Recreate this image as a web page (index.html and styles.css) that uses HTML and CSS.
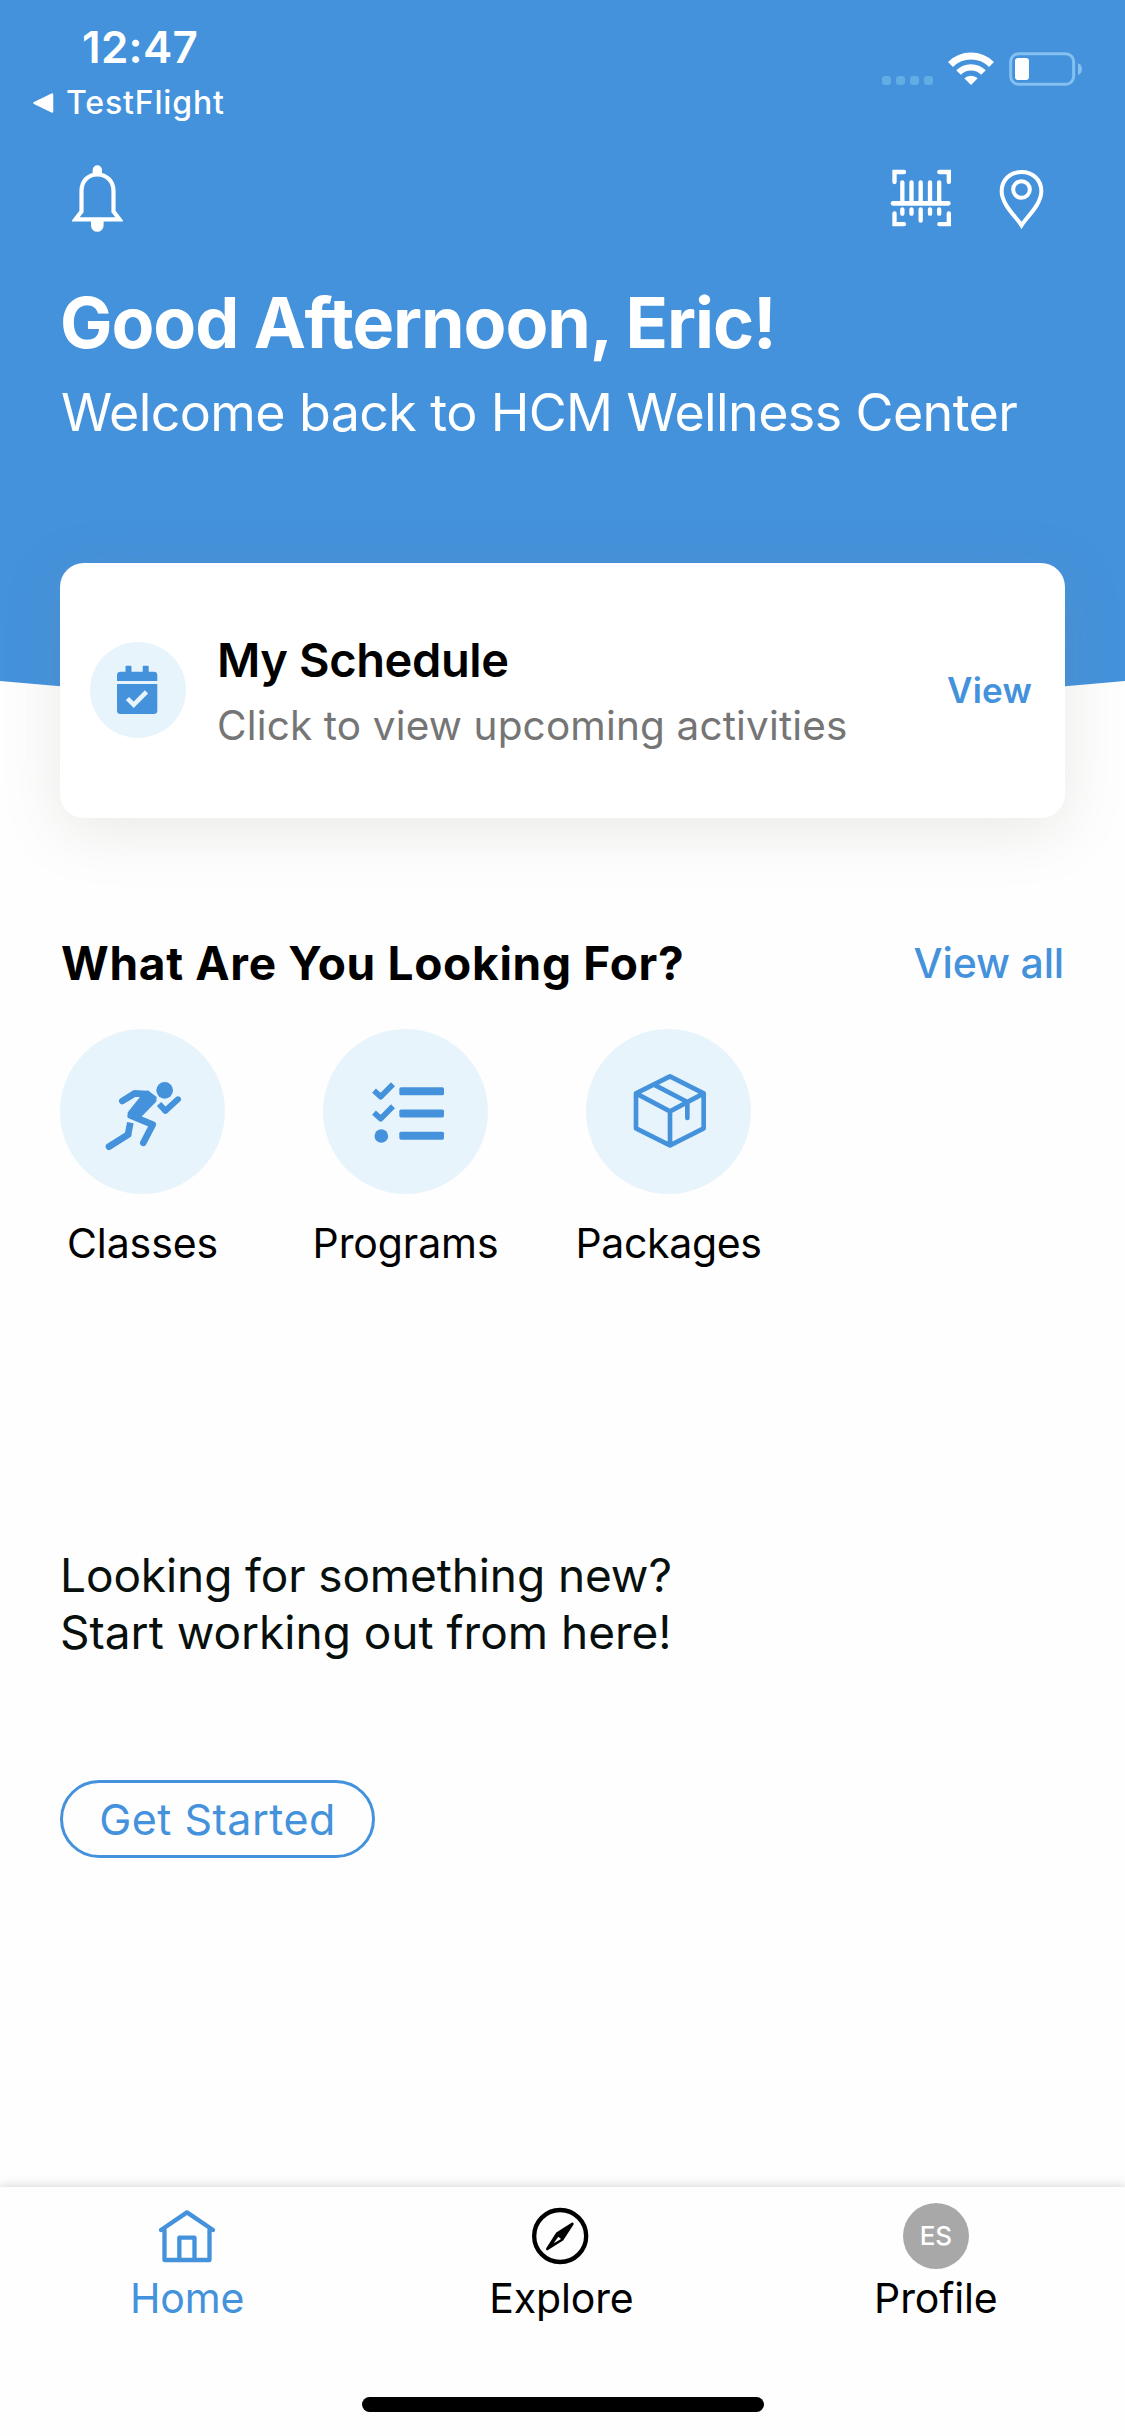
FILE: index.html
```html
<!DOCTYPE html>
<html lang="en">
<head>
<meta charset="utf-8">
<title>HCM Wellness Center</title>
<link rel="stylesheet" href="styles.css">
</head>
<body>
<div class="screen">
  <header class="hero">
    <div class="status">
      <div class="status-left">
        <div class="time">12:47</div>
        <div class="back">
          <svg width="22" height="22" viewBox="0 0 22 22"><path d="M2.5 11 20 2.5V19.5Z" fill="#fff" stroke="#fff" stroke-width="2.5" stroke-linejoin="round"/></svg>
          <span>TestFlight</span>
        </div>
      </div>
      <svg class="status-icons" width="204" height="37.33" viewBox="120 90 612 112">
        <g fill="#62ade4"><rect x="126" y="168" width="27" height="27" rx="9"/><rect x="168" y="168" width="27" height="27" rx="9"/><rect x="210" y="168" width="27" height="27" rx="9"/><rect x="252" y="168" width="27" height="27" rx="9"/></g>
        <g fill="none" stroke="#fff"><path d="M331.500 133.500A87 87 0 0 1 454.500 133.500" stroke-width="21"/><path d="M355.500 157.500A53 53 0 0 1 430.500 157.500" stroke-width="19"/></g>
        <path d="M393 195 373 175A29 29 0 0 1 413 175Z" fill="#fff"/>
        <rect x="512" y="101" width="189" height="92" rx="24" fill="none" stroke="#84c0f0" stroke-width="9"/>
        <rect x="525" y="114" width="42" height="66" rx="9" fill="#fff"/>
        <path d="M714 130C722 133 726 140 726 147.500S722 162 714 165Z" fill="#84c0f0"/>
      </svg>
    </div>
    <div class="actions">
      <svg width="51" height="67" viewBox="72 165 51 67">
        <path d="M75.500 219.300 81.500 211.500V191C81.500 181 88 174.500 97.300 174.500S113.500 181 113.500 191V211.500L119.500 219.300Z" fill="none" stroke="#fff" stroke-width="4.2"/>
        <path d="M92.600 174V170A4.700 4.700 0 0 1 102 170V174Z" fill="#fff"/>
        <path d="M91 220H103.600V225.500A6.300 6.300 0 0 1 91 225.500Z" fill="#fff"/>
      </svg>
      <div class="actions-right">
        <svg width="62" height="58.67" viewBox="150 448 186 176" fill="none" stroke="#fff" stroke-width="13" stroke-linecap="round">
          <path d="M163.500 487V457H192M298 457H326.500V487M163.500 581V613.500H192M298 613.500H326.500V581"/>
          <path d="M187 488V545M214.500 488V545M242 488V545M270 488V545M297.500 488V545M187 569V582M214.500 569V582M242 569V603M270 569V582M297.500 569V582"/>
          <path d="M159 551H325" stroke-width="14"/>
        </svg>
        <svg width="45.33" height="60" viewBox="476 442 136 180" fill="none" stroke="#fff" stroke-width="12">
          <path d="M543.500 611C528 586 484 549 484 509C484 474 510 451 543.500 451S603 474 603 509C603 549 559 586 543.500 611Z"/>
          <circle cx="543.500" cy="503.500" r="25"/>
        </svg>
      </div>
    </div>
    <h1 class="greeting">Good Afternoon, Eric!</h1>
    <p class="welcome">Welcome back to HCM Wellness Center</p>
  </header>
  <svg width="1125" height="26" viewBox="0 0 1125 26"><path d="M0 0Q562.500 52 1125 0Z" fill="#4492dc"/></svg>

  <section class="card">
    <div class="card-icon">
      <svg width="60" height="60" viewBox="108 660 60 60">
        <g fill="#4492dc"><rect x="125.500" y="665.700" width="6" height="9" rx="1"/><rect x="142.700" y="665.700" width="6" height="9" rx="1"/><path d="M117 681V675A3.500 3.500 0 0 1 120.500 671.800H153.800A3.500 3.500 0 0 1 157.300 675V681Z"/><path d="M117 684H157.300V710.500A3.500 3.500 0 0 1 153.800 714H120.500A3.500 3.500 0 0 1 117 710.500Z"/></g>
        <path d="M127.500 698.500 133.700 704.800 146.500 691.800" fill="none" stroke="#e8f4fb" stroke-width="4.6"/>
      </svg>
    </div>
    <div class="card-text">
      <div class="card-title">My Schedule</div>
      <div class="card-sub">Click to view upcoming activities</div>
    </div>
    <a class="card-link">View</a>
  </section>

  <main class="content">
    <div class="section-head">
      <h2 class="section-title">What Are You Looking For?</h2>
      <a class="view-all">View all</a>
    </div>
    <div class="shortcuts">
      <div class="shortcut">
        <div class="bubble">
          <svg width="80" height="80" viewBox="188 514 240 240" fill="none" stroke="#4492dc" stroke-width="20" stroke-linecap="round" stroke-linejoin="round">
            <circle cx="373" cy="569" r="25" fill="#4492dc" stroke="none"/>
            <path d="M246 601 283 578 318 580"/>
            <path d="M304 586 264 636V650L296 653 346 602 347 590 322 571Z" fill="#4492dc" stroke-width="4"/>
            <path d="M272 645 337 672 309 726"/>
            <path d="M270 666 263 702" stroke-linecap="butt"/>
            <path d="M263 702 206 738"/>
            <path d="M356 610 375 630 380 626" stroke-width="18" stroke-linecap="butt"/>
            <path d="M375 630 413 596" stroke-width="18"/>
          </svg>
        </div>
        <span class="label">Classes</span>
      </div>
      <div class="shortcut">
        <div class="bubble">
          <svg width="80" height="80" viewBox="977 514 240 240">
            <g fill="none" stroke="#4492dc" stroke-width="17" stroke-linejoin="round"><path d="M1001 570 1021 588 1058 551"/><path d="M1001 636 1021 654 1058 617"/></g>
            <g fill="#4492dc"><circle cx="1023" cy="706" r="20.500"/><rect x="1077" y="560" width="134" height="24" rx="5"/><rect x="1077" y="626.500" width="134" height="24" rx="5"/><rect x="1077" y="693" width="134" height="24" rx="5"/></g>
          </svg>
        </div>
        <span class="label">Programs</span>
      </div>
      <div class="shortcut">
        <div class="bubble">
          <svg width="80" height="80" viewBox="688 514 240 240" fill="none" stroke="#4492dc" stroke-width="14" stroke-linecap="round" stroke-linejoin="round">
            <path d="M811 527 912 578V683L811 734 709 683V578ZM709 578 811 632 912 578M811 632V734M763 552 863 604V652"/>
          </svg>
        </div>
        <span class="label packages">Packages</span>
      </div>
    </div>
    <p class="prompt"><span class="prompt-lead">Looking for something new?</span><br>Start working out from here!</p>
    <button class="start">Get Started</button>
  </main>

  <nav class="tabs">
    <div class="tab active">
      <div class="tab-icon"><svg width="60" height="60" viewBox="471 165 180 180" fill="none" stroke="#4492dc" stroke-width="13" stroke-linecap="round" stroke-linejoin="round"><path d="M483 237 561 184 639 237M493.500 236V327H628.500V236M538 327V260H583.500V327"/></svg></div>
      <span>Home</span>
    </div>
    <div class="tab explore">
      <div class="tab-icon"><svg width="60" height="60" viewBox="390 165 180 180"><circle cx="480.500" cy="255" r="78" fill="none" stroke="#000" stroke-width="13"/><path d="M517 219 487 265 442 294 472 247Z" stroke="#000" stroke-width="8" stroke-linejoin="round"/><path d="M475 257 483 264 461 277Z" fill="#fff"/></svg></div>
      <span>Explore</span>
    </div>
    <div class="tab">
      <div class="tab-icon"><div class="avatar">ES</div></div>
      <span>Profile</span>
    </div>
    <div class="indicator"></div>
  </nav>
</div>
</body>
</html>
```
FILE: styles.css
```css
* { box-sizing: border-box; margin: 0; padding: 0; }
body { background: #fefefe; font-family: Inter, "Liberation Sans", sans-serif; color: #000; }
svg { display: block; flex: none; }
.screen { width: 1125px; height: 2436px; display: flex; flex-direction: column; background: #fefefe; overflow: hidden; }

.hero { height: 681px; flex: none; background: #4492dc; color: #fff; }
.status { height: 165px; display: flex; justify-content: space-between; padding: 21px 41px 0 32px; }
.time { height: 52px; line-height: 52px; padding-left: 50px; font-size: 44px; font-weight: 600; letter-spacing: 0.3px; }
.back { display: flex; align-items: center; gap: 12px; height: 40px; margin-top: 10px; line-height: 40px; font-size: 32px; font-weight: 450; letter-spacing: 0.85px; }
.status-icons { margin-top: 29px; }
.actions { display: flex; align-items: center; justify-content: space-between; height: 67px; padding: 0 81px 0 72px; }
.actions-right { display: flex; align-items: center; gap: 46.700px; }
.greeting { margin: 48.500px 0 0 60px; line-height: 84px; font-size: 70px; font-weight: 700; letter-spacing: -1.05px; white-space: nowrap; }
.welcome { margin: 15.500px 0 0 61px; line-height: 65px; font-size: 52px; font-weight: 400; letter-spacing: -0.62px; white-space: nowrap; }

.card { display: flex; position: relative; align-items: center; flex: none; height: 255px; margin: -144px 60px 0; padding: 0 33px 0 30px; background: #fff; border-radius: 24px; box-shadow: 0 12px 60px rgba(125, 125, 115, 0.16); }
.card-icon { display: flex; align-items: center; justify-content: center; width: 96px; height: 96px; margin-bottom: 1px; border-radius: 50%; background: #e8f4fb; }
.card-text { flex: 1; display: flex; flex-direction: column; gap: 13px; margin: 2px 0 0 31px; white-space: nowrap; }
.card-title { line-height: 56px; font-size: 47px; font-weight: 600; letter-spacing: -0.4px; }
.card-sub { line-height: 50px; font-size: 40.500px; color: #757575; letter-spacing: 0.15px; }
.card-link { margin-bottom: 1px; color: #4492dc; font-size: 35px; font-weight: 600; letter-spacing: 0.2px; }

.content { flex: 1; display: flex; flex-direction: column; align-items: flex-start; padding: 117px 60px 0; }
.section-head { display: flex; align-items: center; justify-content: space-between; width: 100%; height: 56px; padding-right: 1px; white-space: nowrap; }
.section-title { padding-left: 1px; font-size: 46px; font-weight: 700; letter-spacing: 0.7px; }
.view-all { color: #4492dc; font-size: 41px; font-weight: 450; letter-spacing: -0.15px; }
.shortcuts { display: flex; gap: 98px; margin-top: 38px; }
.shortcut { display: flex; flex-direction: column; align-items: center; gap: 24px; width: 165px; }
.bubble { display: flex; align-items: center; justify-content: center; width: 165px; height: 165px; border-radius: 50%; background: #e8f4fb; }
.label { line-height: 50px; font-size: 41px; letter-spacing: -0.1px; white-space: nowrap; }
.packages { letter-spacing: -0.35px; }
.prompt { margin-top: 278.500px; line-height: 57px; font-size: 46px; color: #07100c; white-space: nowrap; }
.prompt-lead { letter-spacing: -0.1px; }
.start { width: 315px; height: 78px; margin-top: 119.500px; border: 3px solid #4492dc; border-radius: 39px; background: transparent; color: #4492dc; font-family: inherit; font-size: 43px; letter-spacing: 0.5px; white-space: nowrap; }

.tabs { position: relative; display: grid; grid-template-columns: repeat(3, 1fr); flex: none; height: 249px; padding: 16px 2px 0 0; background: #fefefe; box-shadow: 0 -1px 10px rgba(0, 0, 0, 0.17); }
.tab { display: flex; flex-direction: column; align-items: center; gap: 4px; line-height: 50px; font-size: 41px; letter-spacing: -0.15px; }
.active { color: #4492dc; }
.tab-icon { display: flex; align-items: center; justify-content: center; height: 66px; }
.explore .tab-icon { padding-right: 3px; }
.avatar { width: 66px; height: 66px; border-radius: 50%; background: #a8a8a8; color: #fff; line-height: 66px; font-size: 26px; font-weight: 500; text-align: center; }
.indicator { position: absolute; left: 362px; bottom: 24px; width: 402px; height: 15px; border-radius: 8px; background: #000; }
```
